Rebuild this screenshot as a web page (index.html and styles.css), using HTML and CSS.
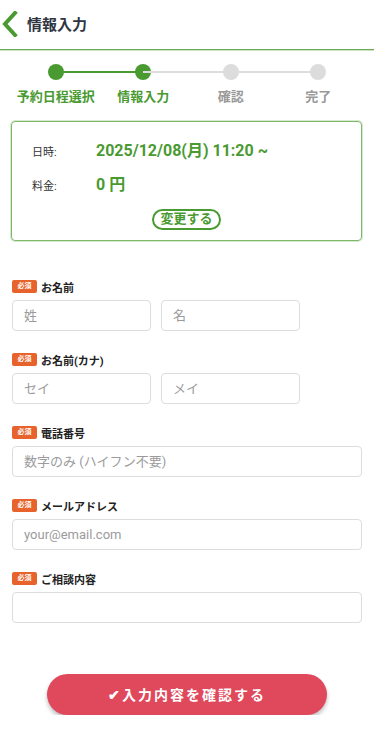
FILE: index.html
```html
<!DOCTYPE html>
<html lang="ja">
<head>
    <meta charset="UTF-8">
    <meta name="viewport" content="width=device-width, initial-scale=1.0">
    <title>情報入力</title>
    <link rel="stylesheet" href="styles.css">
</head>
<body>
    <header class="header">
        <a class="back" href="#">
            <svg width="16" height="26" viewBox="0 0 16 26"><path d="M13 2 L3 13 L13 24" fill="none" stroke="#4a9a32" stroke-width="4" stroke-linecap="square"/></svg>
        </a>
        <h1>情報入力</h1>
    </header>

    <ol class="steps">
        <li class="step done"><span class="dot"></span><span class="name">予約日程選択</span></li>
        <li class="step done"><span class="dot"></span><span class="name">情報入力</span></li>
        <li class="step"><span class="dot"></span><span class="name">確認</span></li>
        <li class="step"><span class="dot"></span><span class="name">完了</span></li>
    </ol>

    <section class="summary">
        <dl>
            <dt>日時:</dt>
            <dd>2025/12/08(月) 11:20 ~</dd>
            <dt>料金:</dt>
            <dd>0 円</dd>
        </dl>
        <div class="change"><button type="button">変更する</button></div>
    </section>

    <form class="form">
        <div class="field">
            <label><span class="req">必須</span>お名前</label>
            <div class="pair">
                <input type="text" placeholder="姓">
                <input type="text" placeholder="名">
            </div>
        </div>
        <div class="field">
            <label><span class="req">必須</span>お名前(カナ)</label>
            <div class="pair">
                <input type="text" placeholder="セイ">
                <input type="text" placeholder="メイ">
            </div>
        </div>
        <div class="field">
            <label><span class="req">必須</span>電話番号</label>
            <input type="tel" placeholder="数字のみ (ハイフン不要)">
        </div>
        <div class="field">
            <label><span class="req">必須</span>メールアドレス</label>
            <input type="email" placeholder="your@email.com">
        </div>
        <div class="field">
            <label><span class="req">必須</span>ご相談内容</label>
            <input type="text">
        </div>

        <div class="submit">
            <button type="button">&#10004;入力内容を確認する</button>
        </div>
    </form>
</body>
</html>
```

FILE: styles.css
```css
* {
    box-sizing: border-box;
}
body {
    margin: 0;
    background: #fff;
    color: #333;
    font-family: Roboto, "Noto Sans CJK JP", sans-serif;
}
.header {
    height: 50px;
    display: flex;
    align-items: center;
    border-bottom: 1px solid #6aac55;
    box-shadow: 0 1px 0 rgba(106, 172, 85, 0.35);
    padding: 0 0 2px 2px;
}
.back {
    display: flex;
    width: 16px;
    height: 26px;
}
.header h1 {
    margin: 0 0 0 9px;
    font-size: 15px;
    font-weight: bold;
    color: #2f3542;
}

.steps {
    list-style: none;
    margin: 14px 12px 0;
    padding: 0;
    display: grid;
    grid-template-columns: repeat(4, 1fr);
}
.step {
    position: relative;
    display: flex;
    flex-direction: column;
    align-items: center;
}
.step + .step::before {
    content: "";
    position: absolute;
    top: 7px;
    right: 50%;
    width: 100%;
    height: 2px;
    background: #ddd;
}
.step.done + .step.done::before {
    background: #4a9a32;
}
.dot {
    position: relative;
    width: 16px;
    height: 16px;
    border-radius: 50%;
    background: #dcdcdc;
}
.done .dot {
    background: #4a9a32;
}
.name {
    margin-top: 6px;
    font-size: 13px;
    font-weight: bold;
    color: #999;
}
.done .name {
    color: #4a9a32;
}

.summary {
    margin: 16px 12px 0 11px;
    border: 1px solid #7cb868;
    box-shadow: 0 0 0 1px rgba(124, 184, 104, 0.3);
    border-radius: 4px;
    padding: 18px 20px 10px;
}
.summary dl {
    margin: 0;
    display: grid;
    grid-template-columns: 64px 1fr;
    row-gap: 12px;
    align-items: center;
}
.summary dt {
    font-size: 11px;
    color: #333;
}
.summary dd {
    margin: 0;
    font-size: 16px;
    font-weight: bold;
    color: #4a9a32;
    line-height: 22px;
}
.change {
    text-align: center;
    margin-top: 12px;
}
.change button {
    font-family: inherit;
    font-size: 13px;
    font-weight: bold;
    color: #4a9a32;
    background: #fff;
    border: 2px solid #4a9a32;
    border-radius: 12px;
    padding: 0 6px;
    height: 21px;
    line-height: 16px;
}

.form {
    margin: 39px 12px 0;
}
.field {
    margin-bottom: 22px;
}
.field label {
    display: flex;
    align-items: center;
    font-size: 11px;
    font-weight: bold;
    color: #222;
    margin-bottom: 6px;
    height: 14px;
}
.req {
    display: inline-block;
    background: #e8632b;
    color: #fff;
    font-size: 7px;
    font-weight: bold;
    width: 25px;
    height: 13px;
    line-height: 13px;
    text-align: center;
    border-radius: 2px;
    margin-right: 4px;
}
.pair {
    display: flex;
    gap: 10px;
}
.form input {
    display: block;
    width: 100%;
    height: 31px;
    border: 1px solid #ddd;
    border-radius: 4px;
    padding: 0 11px;
    font-family: inherit;
    font-size: 13px;
    color: #333;
    outline: none;
}
.pair input {
    width: 139px;
}
.form input::placeholder {
    color: #9b9b9b;
}

.submit {
    margin-top: 51px;
    display: flex;
    justify-content: center;
}
.submit button {
    width: 280px;
    height: 41px;
    border: none;
    border-radius: 21px;
    background: #e0485c;
    color: #fff;
    font-family: inherit;
    font-size: 14px;
    font-weight: bold;
    letter-spacing: 2px;
    box-shadow: 0 3px 4px rgba(0, 0, 0, 0.25);
}
```
